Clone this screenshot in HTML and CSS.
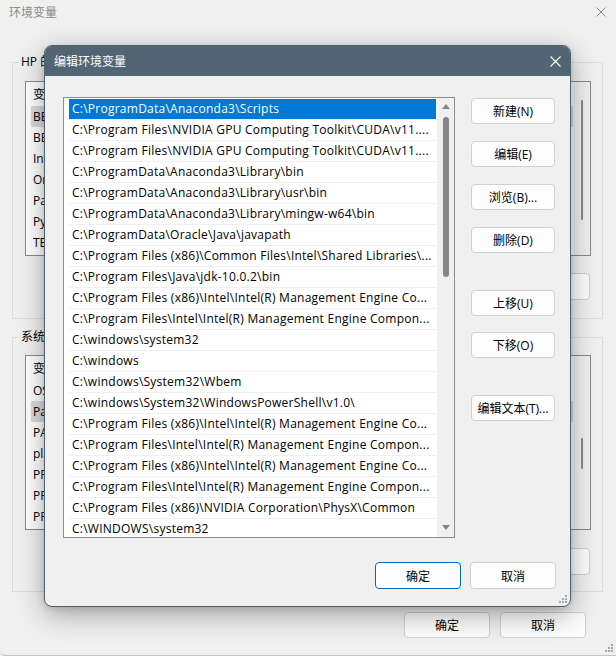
FILE: index.html
```html
<!DOCTYPE html>
<html lang="zh-CN">
<head>
<meta charset="utf-8">
<title>编辑环境变量</title>
<link rel="stylesheet" href="styles.css">
</head>
<body>
<div class="win">
  <div class="win-title">
    <span>环境变量</span>
    <svg class="win-close" width="10" height="10" viewBox="0 0 10 10"><path d="M0.5 0.5 L9.5 9.5 M9.5 0.5 L0.5 9.5" stroke="#8a8a8a" stroke-width="1" fill="none"/></svg>
  </div>
  <div class="win-body">
    <fieldset class="group group-user">
      <legend>HP 的用户变量(U)</legend>
      <div class="vlist">
        <div class="vlist-main">
          <div class="vhead"><span class="c1">变量</span></div>
          <div class="vrow sel"><span class="c1">BEAST</span></div>
          <div class="vrow"><span class="c1">BEAGLE</span></div>
          <div class="vrow"><span class="c1">IntelliJ</span></div>
          <div class="vrow"><span class="c1">OneDrive</span></div>
          <div class="vrow"><span class="c1">Path</span></div>
          <div class="vrow"><span class="c1">PyCharm</span></div>
          <div class="vrow"><span class="c1">TEMP</span></div>
        </div>
        <div class="vscroll"><div class="vthumb vthumb-user"></div></div>
      </div>
      <div class="grp-btns grp-btns-user">
        <button class="btn btn-grp">新建(N)...</button>
        <button class="btn btn-grp">编辑(E)...</button>
        <button class="btn btn-grp">删除(D)</button>
      </div>
    </fieldset>
    <fieldset class="group group-sys">
      <legend>系统变量(S)</legend>
      <div class="vlist">
        <div class="vlist-main">
          <div class="vhead"><span class="c1">变量</span></div>
          <div class="vrow"><span class="c1">OS</span></div>
          <div class="vrow sel"><span class="c1">Path</span></div>
          <div class="vrow"><span class="c1">PATHEXT</span></div>
          <div class="vrow"><span class="c1">platform</span></div>
          <div class="vrow"><span class="c1">PROCESSOR</span></div>
          <div class="vrow"><span class="c1">PROCESSOR</span></div>
          <div class="vrow"><span class="c1">PROCESSOR</span></div>
        </div>
        <div class="vscroll"><div class="vthumb vthumb-sys"></div></div>
      </div>
      <div class="grp-btns grp-btns-sys">
        <button class="btn btn-grp">新建(W)...</button>
        <button class="btn btn-grp">编辑(I)...</button>
        <button class="btn btn-grp">删除(L)</button>
      </div>
    </fieldset>
    <div class="win-foot">
      <button class="btn btn-foot">确定</button>
      <button class="btn btn-foot">取消</button>
    </div>
  </div>
  <svg class="grip grip-win" width="10" height="10" viewBox="0 0 10 10"><rect x="8" y="2" width="2" height="2"/><rect x="5" y="5" width="2" height="2"/><rect x="8" y="5" width="2" height="2"/><rect x="2" y="8" width="2" height="2"/><rect x="5" y="8" width="2" height="2"/><rect x="8" y="8" width="2" height="2"/></svg>
</div>

<div class="dlg">
  <div class="dlg-title">
    <span>编辑环境变量</span>
    <svg class="dlg-close" width="11" height="11" viewBox="0 0 11 11"><path d="M0.5 0.5 L10.5 10.5 M10.5 0.5 L0.5 10.5" stroke="#ffffff" stroke-width="1.1" fill="none"/></svg>
  </div>
  <div class="dlg-body">
    <div class="dlist">
      <div class="dlist-items">
        <div class="drow sel">C:\ProgramData\Anaconda3\Scripts</div>
        <div class="drow">C:\Program Files\NVIDIA GPU Computing Toolkit\CUDA\v11....</div>
        <div class="drow">C:\Program Files\NVIDIA GPU Computing Toolkit\CUDA\v11....</div>
        <div class="drow">C:\ProgramData\Anaconda3\Library\bin</div>
        <div class="drow">C:\ProgramData\Anaconda3\Library\usr\bin</div>
        <div class="drow">C:\ProgramData\Anaconda3\Library\mingw-w64\bin</div>
        <div class="drow">C:\ProgramData\Oracle\Java\javapath</div>
        <div class="drow">C:\Program Files (x86)\Common Files\Intel\Shared Libraries\...</div>
        <div class="drow">C:\Program Files\Java\jdk-10.0.2\bin</div>
        <div class="drow">C:\Program Files (x86)\Intel\Intel(R) Management Engine Co...</div>
        <div class="drow">C:\Program Files\Intel\Intel(R) Management Engine Compon...</div>
        <div class="drow">C:\windows\system32</div>
        <div class="drow">C:\windows</div>
        <div class="drow">C:\windows\System32\Wbem</div>
        <div class="drow">C:\windows\System32\WindowsPowerShell\v1.0\</div>
        <div class="drow">C:\Program Files (x86)\Intel\Intel(R) Management Engine Co...</div>
        <div class="drow">C:\Program Files\Intel\Intel(R) Management Engine Compon...</div>
        <div class="drow">C:\Program Files (x86)\Intel\Intel(R) Management Engine Co...</div>
        <div class="drow">C:\Program Files\Intel\Intel(R) Management Engine Compon...</div>
        <div class="drow">C:\Program Files (x86)\NVIDIA Corporation\PhysX\Common</div>
        <div class="drow">C:\WINDOWS\system32</div>
      </div>
      <div class="dscroll">
        <svg class="arrow arrow-up" width="8" height="5" viewBox="0 0 8 5"><polygon points="0,5 4,0 8,5"/></svg>
        <div class="dthumb"></div>
        <div class="dscroll-fill"></div>
        <svg class="arrow arrow-down" width="8" height="5" viewBox="0 0 8 5"><polygon points="0,0 8,0 4,5"/></svg>
      </div>
    </div>
    <div class="dbtns">
      <button class="btn btn-side">新建(N)</button>
      <button class="btn btn-side">编辑(E)</button>
      <button class="btn btn-side">浏览(B)...</button>
      <button class="btn btn-side">删除(D)</button>
      <button class="btn btn-side btn-sep">上移(U)</button>
      <button class="btn btn-side btn-tight">下移(O)</button>
      <button class="btn btn-side btn-sep">编辑文本(T)...</button>
    </div>
  </div>
  <div class="dlg-foot">
    <button class="btn btn-dfoot btn-default">确定</button>
    <button class="btn btn-dfoot">取消</button>
  </div>
  <svg class="grip grip-dlg" width="10" height="10" viewBox="0 0 10 10"><rect x="8" y="2" width="2" height="2"/><rect x="5" y="5" width="2" height="2"/><rect x="8" y="5" width="2" height="2"/><rect x="2" y="8" width="2" height="2"/><rect x="5" y="8" width="2" height="2"/><rect x="8" y="8" width="2" height="2"/></svg>
</div>
</body>
</html>
```

FILE: styles.css
```css
* { box-sizing: border-box; }

html, body {
  margin: 0;
  padding: 0;
}

body {
  width: 616px;
  height: 656px;
  overflow: hidden;
  position: relative;
  background: #f0f0f0;
  font-family: "Open Sans", "Noto Sans CJK SC", sans-serif;
  font-size: 12px;
  color: #000;
}

/* ---------- outer window ---------- */
.win {
  position: relative;
  height: 656px;
  display: flex;
  flex-direction: column;
  background: #f0f0f0;
  border-bottom: 1px solid #c4c4c4;
  border-bottom-left-radius: 6px;
}

.win-title {
  height: 24px;
  display: flex;
  align-items: center;
  justify-content: space-between;
  padding: 0 10px 0 9px;
  color: #8a8a8a;
  font-size: 12px;
}

.win-body {
  padding: 30px 13px 0 12px;
  display: flex;
  flex-direction: column;
}

.group {
  margin: 0;
  border: 1px solid #dcdcdc;
  min-width: 0;
}

.group legend {
  padding: 0 2px;
  margin-left: -6px;
  line-height: 16px;
  height: 16px;
}

.group-user { padding: 11px 11px 18px 12px; }
.group-sys { padding: 10px 11px 16px 12px; margin-top: 10px; }

.vlist {
  height: 175px;
  border: 1px solid #8a8a8a;
  background: #fff;
  display: flex;
}

.vlist-main {
  flex: 1;
  padding-left: 5px;
  overflow: hidden;
}

.vhead {
  height: 24px;
  display: flex;
  align-items: center;
}

.vrow {
  height: 21px;
  display: flex;
  align-items: center;
  white-space: nowrap;
}

.vrow.sel { background: #dadada; }

.c1 {
  width: 180px;
  padding-left: 2px;
  flex: none;
}

.vscroll {
  width: 17px;
  flex: none;
  background: #f0f0f0;
  display: flex;
  flex-direction: column;
  align-items: center;
}

.vthumb {
  width: 2px;
  background: #8a8a8a;
  border-radius: 1px;
}

.vthumb-user { margin-top: 18px; height: 120px; }
.vthumb-sys { margin-top: 82px; height: 31px; }

.grp-btns {
  display: flex;
  justify-content: flex-end;
  gap: 9px;
  padding-right: 1px;
}

.grp-btns-user { margin-top: 17px; }
.grp-btns-sys { margin-top: 18px; }

.btn {
  font: inherit;
  color: #000;
  background: #fdfdfd;
  border: 1px solid #d0d0d0;
  border-radius: 4px;
  padding: 0;
  display: flex;
  align-items: center;
  justify-content: center;
  white-space: nowrap;
}

.btn-grp { width: 85px; height: 27px; }

.win-foot {
  display: flex;
  justify-content: flex-end;
  gap: 10px;
  margin-top: 20px;
  padding-right: 17px;
}

.btn-foot { width: 86px; height: 26px; }

.grip {
  position: absolute;
  fill: #a8a8a8;
}

.grip-win { right: 3px; bottom: 3px; }

/* ---------- edit dialog ---------- */
.dlg {
  position: absolute;
  left: 44px;
  top: 45px;
  width: 527px;
  height: 562px;
  border: 1px solid #4e606c;
  border-radius: 8px;
  background: #f0f0f0;
  box-shadow: 0 8px 28px rgba(0, 0, 0, 0.32), 0 2px 6px rgba(0, 0, 0, 0.12);
  display: flex;
  flex-direction: column;
  overflow: hidden;
}

.dlg-title {
  height: 30px;
  flex: none;
  background: #526572;
  color: #fff;
  display: flex;
  align-items: center;
  justify-content: space-between;
  padding: 0 9px 0 9px;
  font-size: 12px;
}

.dlg-body {
  display: flex;
  gap: 16px;
  padding: 21px 15px 0 18px;
}

.dlist {
  width: 392px;
  height: 441px;
  flex: none;
  border: 1px solid #8d8d8d;
  background: #fff;
  display: flex;
}

.dlist-items {
  flex: 1;
  padding: 1px 1px 0 5px;
  overflow: hidden;
}

.drow {
  height: 21px;
  line-height: 20px;
  border-bottom: 1px solid #f0f0f0;
  padding-left: 3px;
  white-space: nowrap;
  overflow: hidden;
  letter-spacing: 0.25px;
}

.drow.sel {
  background: #0078d7;
  color: #fff;
  border-bottom-color: #f0f0f0;
}

.dscroll {
  width: 17px;
  flex: none;
  background: #f0f0f0;
  display: flex;
  flex-direction: column;
  align-items: center;
}

.arrow { fill: #858585; flex: none; }
.arrow-up { margin-top: 6px; }
.arrow-down { margin-bottom: 7px; }

.dthumb {
  width: 6px;
  height: 160px;
  margin-top: 8px;
  background: #868686;
  border-radius: 3px;
  flex: none;
}

.dscroll-fill { flex: 1; }

.dbtns {
  width: 84px;
  flex: none;
  display: flex;
  flex-direction: column;
  gap: 17px;
  padding-top: 1px;
}

.btn-side { width: 84px; height: 26px; }
.btn-sep { margin-top: 20px; }
.btn-tight { margin-top: -1px; }

.dlg-foot {
  display: flex;
  justify-content: flex-end;
  gap: 9px;
  padding: 24px 14px 0 0;
}

.btn-dfoot { width: 86px; height: 27px; }

.btn-default { border-color: #0067c0; }

.grip-dlg { right: 3px; bottom: 3px; }
```
